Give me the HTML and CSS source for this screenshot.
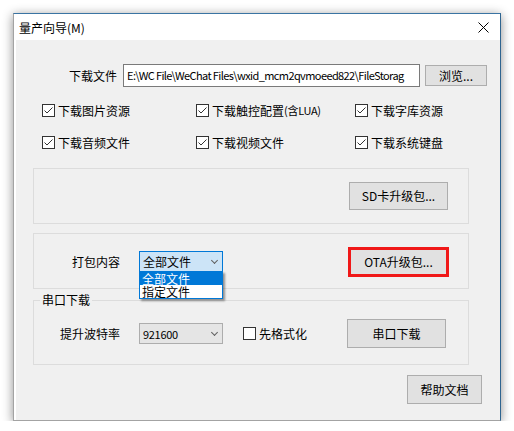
FILE: index.html
```html
<!DOCTYPE html>
<html>
<head>
<meta charset="utf-8">
<link rel="stylesheet" href="styles.css">
</head>
<body>

<div class="window">
  <div class="titlebar">
    <span class="title-text">量产向导(M)</span>
    <svg class="close-icon" width="11" height="11" viewBox="0 0 11 11">
      <path d="M0.5 0.5 L10.5 10.5 M10.5 0.5 L0.5 10.5" stroke="#000" stroke-width="1" fill="none"/>
    </svg>
  </div>

  <div class="client">
    <div class="file-row">
      <span class="file-label">下载文件</span>
      <div class="path-box">E:\WC File\WeChat Files\wxid_mcm2qvmoeed822\FileStorag</div>
      <button class="btn browse-btn">浏览...</button>
    </div>

    <div class="check-grid">
      <label class="check"><span class="box checked"></span>下载图片资源</label>
      <label class="check"><span class="box checked"></span>下载触控配置<span class="latin">(含LUA)</span></label>
      <label class="check"><span class="box checked"></span>下载字库资源</label>
      <label class="check"><span class="box checked"></span>下载音频文件</label>
      <label class="check"><span class="box checked"></span>下载视频文件</label>
      <label class="check"><span class="box checked"></span>下载系统键盘</label>
    </div>

    <div class="group sd-group">
      <button class="btn wide-btn">SD卡升级包...</button>
    </div>

    <div class="group pack-group">
      <span class="pack-label">打包内容</span>
      <div class="select-wrap">
        <div class="select focused">
          <span>全部文件</span>
          <span class="chevron"></span>
        </div>
        <div class="dropdown">
          <div class="option selected">全部文件</div>
          <div class="option">指定文件</div>
        </div>
      </div>
      <button class="btn wide-btn ota-btn">OTA升级包...</button>
    </div>

    <fieldset class="serial-group">
      <legend>串口下载</legend>
      <div class="serial-row">
        <span class="baud-label">提升波特率</span>
        <div class="select">
          <span class="latin">921600</span>
          <span class="chevron"></span>
        </div>
        <label class="check format-check"><span class="box"></span>先格式化</label>
        <button class="btn wide-btn serial-btn">串口下载</button>
      </div>
    </fieldset>

    <div class="help-row">
      <button class="btn help-btn">帮助文档</button>
    </div>
  </div>
</div>

</body>
</html>
```

FILE: styles.css
```css
body {
  background-color: white;
  color: black;
  font-family: "Noto Sans CJK SC", "Noto Sans", sans-serif;
  font-size: 12px;
  margin: 0;
}

.window {
  background-color: white;
  border: 1px solid #a3a3a3;
  border-right-color: #2f6590;
  border-top-color: #3a74a3;
  box-shadow: 0 2px 10px rgba(0, 0, 0, 0.45);
  box-sizing: border-box;
  display: flex;
  flex-direction: column;
  height: 408px;
  margin: 13px 0 0 13px;
  width: 488px;
}

.titlebar {
  align-items: center;
  display: flex;
  flex-shrink: 0;
  height: 26px;
  justify-content: space-between;
  padding: 0 11px 0 5px;
}

.title-text {
  line-height: 14px;
  padding-top: 1px;
}

.close-icon {
  display: block;
  margin-top: 1px;
}

.client {
  background-color: #f0f0f0;
  flex: 1;
  margin: 0 0 0 2px;
}

.latin {
  font-size: 11px;
  letter-spacing: -0.3px;
}

/* file row */
.file-row {
  align-items: center;
  display: flex;
  height: 23px;
  margin-top: 24px;
}

.file-label {
  margin-left: 53px;
  white-space: nowrap;
  width: 48px;
}

.path-box {
  background-color: white;
  border: 1px solid #7a7a7a;
  box-sizing: border-box;
  font-size: 11px;
  height: 23px;
  letter-spacing: -0.6px;
  line-height: 20px;
  margin-left: 6px;
  overflow: hidden;
  padding: 0 3px;
  white-space: nowrap;
  width: 297px;
}

.btn {
  background-color: #e1e1e1;
  border: 1px solid #adadad;
  box-sizing: border-box;
  color: black;
  font-family: inherit;
  font-size: 12px;
  line-height: 14px;
  padding: 0;
}

.browse-btn {
  height: 21px;
  margin-left: 5px;
  width: 62px;
}

/* checkboxes */
.check-grid {
  display: grid;
  grid-template-columns: 154px 159px auto;
  margin-top: 17px;
  padding-left: 26px;
  row-gap: 19px;
}

.check {
  align-items: center;
  display: flex;
  height: 13px;
  line-height: 13px;
  white-space: nowrap;
}

.box {
  background-color: white;
  border: 1px solid #333;
  box-sizing: border-box;
  flex-shrink: 0;
  height: 13px;
  margin-right: 3px;
  width: 13px;
}

.box.checked {
  background: white url("data:image/svg+xml;utf8,<svg xmlns='http://www.w3.org/2000/svg' width='11' height='11'><polyline points='1.5,5.5 4,8 9.5,2.5' fill='none' stroke='%23333' stroke-width='1'/></svg>") no-repeat center;
}

/* groups */
.group {
  align-items: center;
  border: 1px solid #dcdcdc;
  box-sizing: border-box;
  display: flex;
  height: 56px;
  margin-left: 17px;
  width: 436px;
}

.sd-group {
  justify-content: flex-end;
  margin-top: 19px;
  padding-right: 20px;
}

.wide-btn {
  height: 28px;
  width: 99px;
}

.pack-group {
  margin-top: 9px;
  padding-top: 1px;
}

.pack-label {
  margin-left: 38px;
  white-space: nowrap;
  width: 48px;
}

.select-wrap {
  margin-left: 19px;
  position: relative;
}

.select {
  align-items: center;
  background-color: #e5e5e5;
  border: 1px solid #adadad;
  box-sizing: border-box;
  display: flex;
  height: 21px;
  justify-content: space-between;
  padding: 0 5px 0 3px;
  width: 84px;
}

.select.focused {
  background-color: #cce4f7;
  border-color: #0078d7;
}

.chevron {
  border-bottom: 1px solid #606060;
  border-right: 1px solid #606060;
  height: 4px;
  margin-bottom: 3px;
  transform: rotate(45deg);
  width: 4px;
}

.dropdown {
  background-color: white;
  border: 1px solid #0078d7;
  box-shadow: 2px 2px 2px rgba(0, 0, 0, 0.4);
  box-sizing: border-box;
  left: 0;
  position: absolute;
  top: 20px;
  width: 84px;
  z-index: 2;
}

.option {
  height: 13px;
  line-height: 13px;
  overflow: hidden;
  padding-left: 2px;
}

.option.selected {
  background-color: #0078d7;
  color: white;
}

.ota-btn {
  margin-left: 126px;
  outline: 3px solid #f01818;
  outline-offset: -2px;
}

/* serial group */
.serial-group {
  border: 1px solid #dcdcdc;
  box-sizing: border-box;
  margin: 4px 0 0 17px;
  padding: 0;
  width: 436px;
}

.serial-group legend {
  line-height: 14px;
  margin-left: 6px;
  padding: 0 2px;
}

.serial-row {
  align-items: center;
  display: flex;
  height: 29px;
  margin: 12px 0 16px 0;
}

.baud-label {
  margin-left: 26px;
  white-space: nowrap;
  width: 60px;
}

.serial-row .select {
  margin-left: 19px;
}

.format-check {
  margin-left: 20px;
}

.serial-btn {
  height: 29px;
  margin-left: 40px;
}

.help-row {
  display: flex;
  justify-content: flex-end;
  margin-top: 10px;
  padding-right: 18px;
}

.help-btn {
  height: 29px;
  width: 75px;
}
```
